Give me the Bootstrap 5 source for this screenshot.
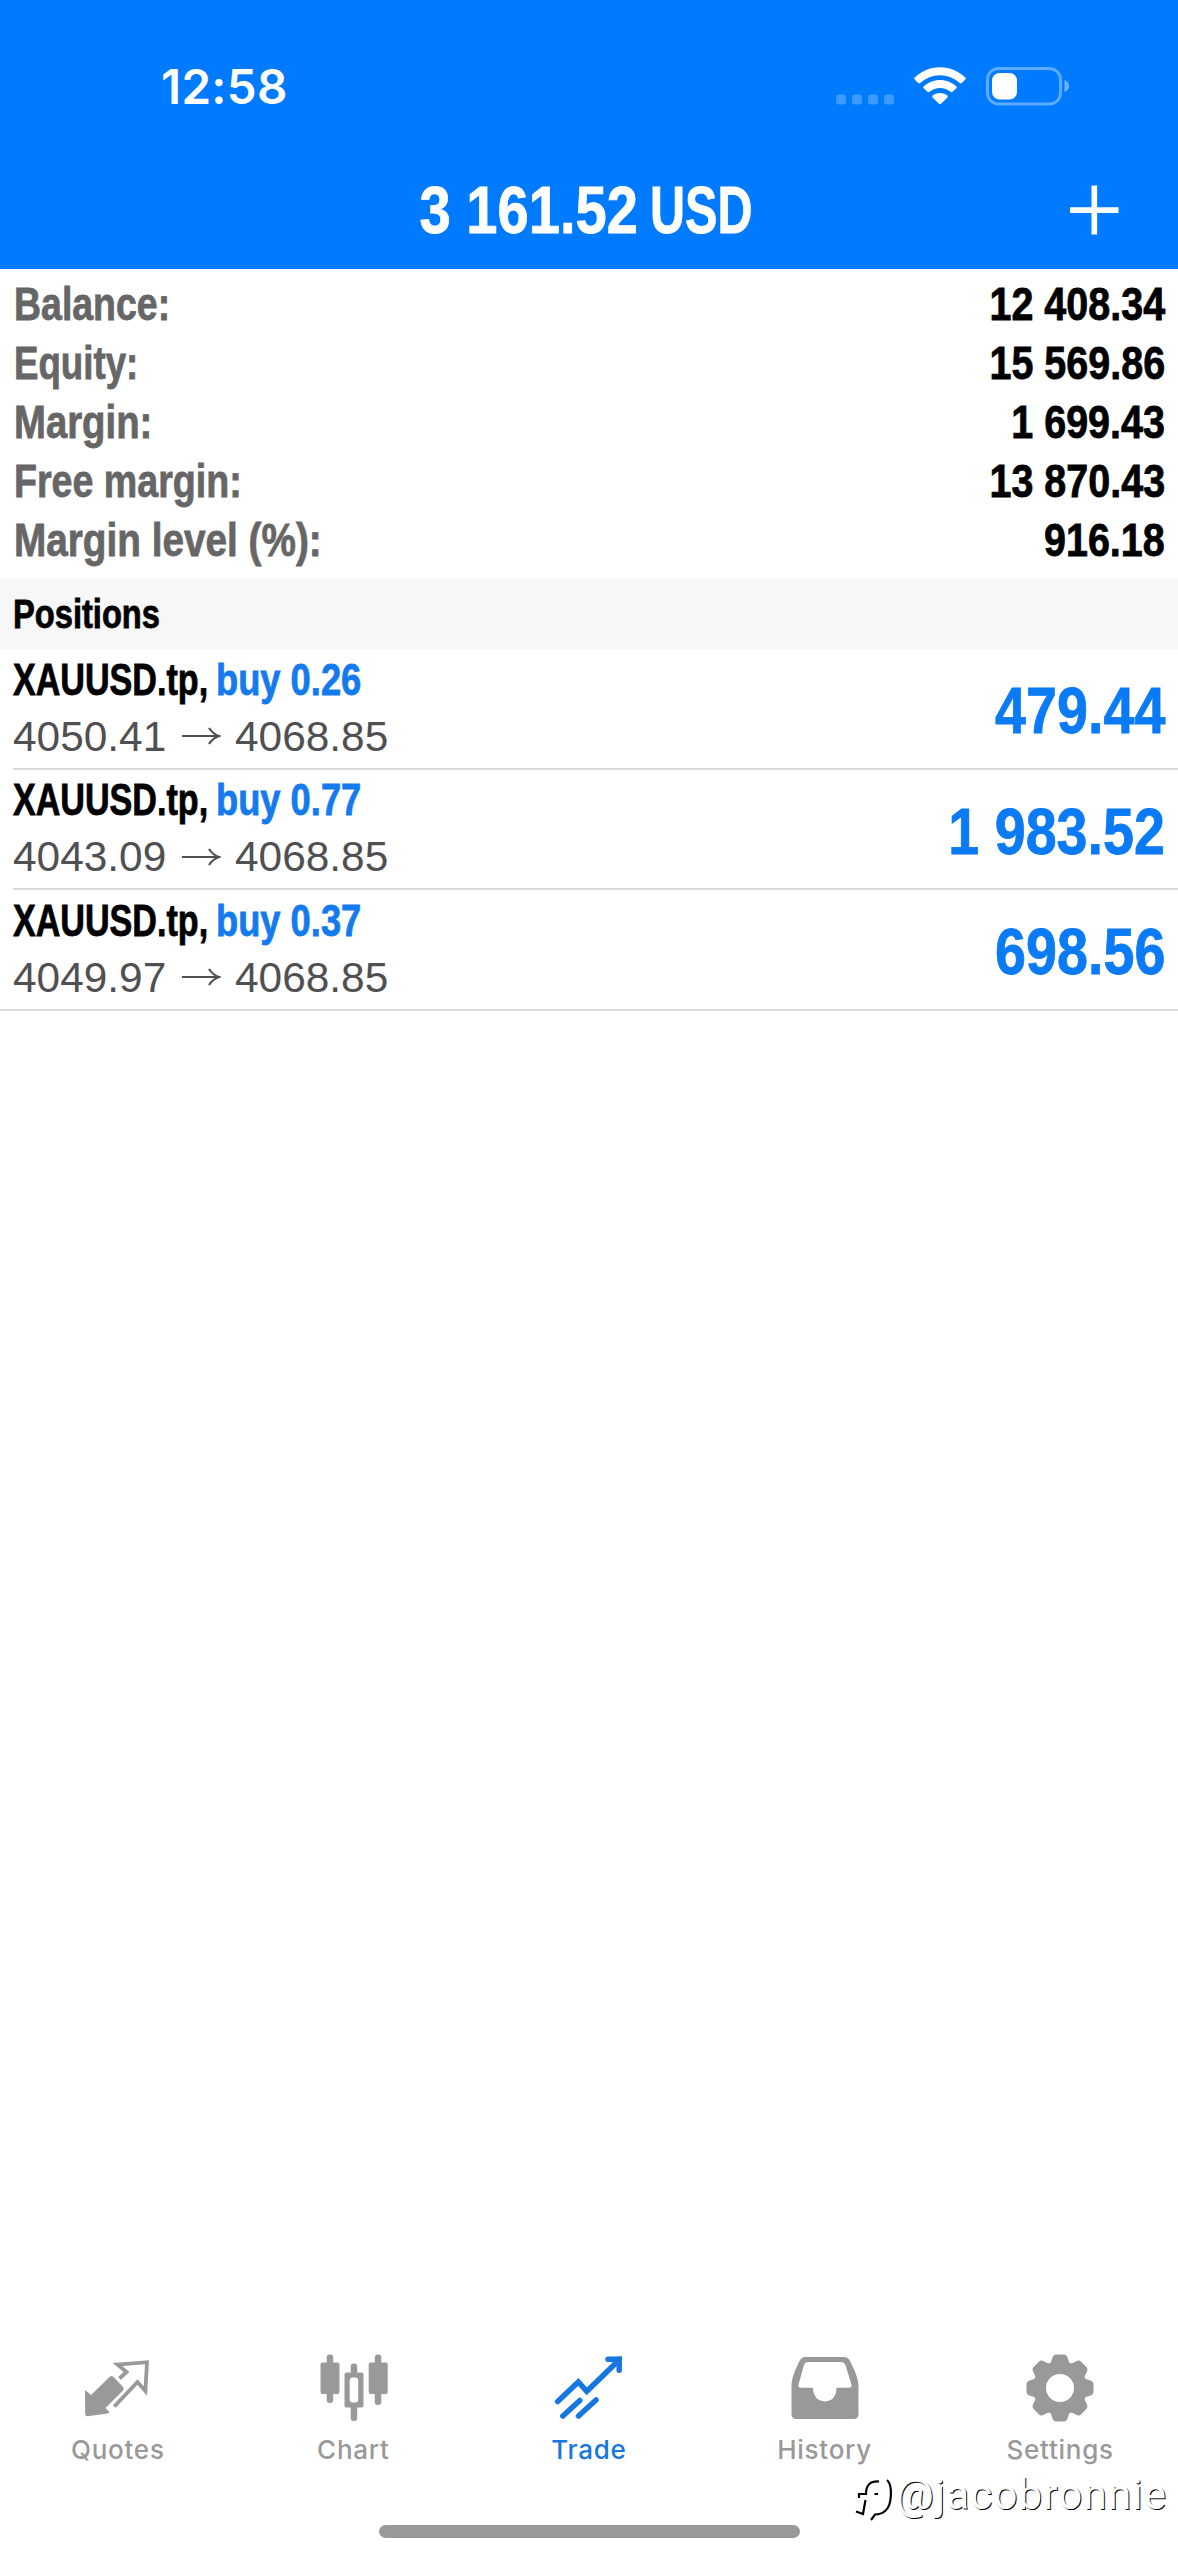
<!DOCTYPE html>
<html lang="en">
<head>
<meta charset="utf-8">
<meta name="viewport" content="width=device-width, initial-scale=1">
<title>Trade</title>
<link href="https://cdn.jsdelivr.net/npm/bootstrap@5.3.0/dist/css/bootstrap.min.css" rel="stylesheet">
<style>
body{font-family:"Liberation Sans",Arial,sans-serif;color:#000;background:#fff}
.screen{width:1178px;height:2560px;overflow:hidden}
.topbar{background:#007aff;height:269px;color:#fff}
.status{height:152px;padding:67px 109px 0 161px}
.clock{font:600 47.5px/40px Inter,sans-serif;letter-spacing:.3px}
.titlebar{height:117px;line-height:117px}
.titlebar .side{width:160px}
.titlebar .side.end{padding:0 59px 2px 0}
.cond{display:inline-block;font-weight:700;white-space:nowrap;transform:scaleX(var(--k));transform-origin:0 50%;-webkit-text-stroke:.8px currentColor}
.cond.rt{transform-origin:100% 50%}
.headline{font-size:66px;margin-left:-8px;gap:12px}
.headline .sum{--k:.85}
.headline .cur{--k:.735}
.summary{height:310px;padding:5px 13px 0 14px;font-size:47px;line-height:59px}
.caption-c{color:#666}
.amount{--k:.84}
.section-h{height:70px;line-height:69px;background:#f7f7f7;padding-left:13px;font-size:41.5px}
.section-h .cond{--k:.787}
.pos{height:120.5px;padding-right:13px;margin-left:13px;border-bottom:2px solid #dadada}
.pos.last{margin-left:0;padding-left:13px}
.deal{padding-top:5.5px}
.deal-name{height:50px;line-height:50px;font-size:44px}
.sym{--k:.775;width:203px}
.act{--k:.825;color:#147bee}
.quote{height:63px;line-height:63px;font-size:42.4px;color:#505052}
.arrow{width:39px;height:20px;margin:0 14px 0 0}
.from{width:169px}
.profit{font-size:65.5px;line-height:123px;color:#0a7af5;--k:.85}
.tabs{height:214px;font:500 26px/32px Inter,sans-serif;color:#999;letter-spacing:.75px}
.tabs svg{width:80px;height:80px;margin-bottom:8px}
.tabs .on{color:#1677e0}
.home{width:421px;height:13px;border-radius:7px;background:#999;left:379px;top:2525px}
.wm{left:850px;top:2470px;height:50px;color:#fff;font:400 42px/50px Roboto,sans-serif;letter-spacing:1.2px;text-shadow:1px 1px 0 #000}
.wm svg{width:46px;height:52px}
</style>
<script src="https://cdn.jsdelivr.net/npm/bootstrap@5.3.0/dist/js/bootstrap.bundle.min.js"></script>
</head>
<body>
<div class="screen position-relative d-flex flex-column">
<header class="topbar">
  <div class="status d-flex justify-content-between align-items-start">
    <span class="clock">12:58</span>
    <svg width="233" height="39" viewBox="836 67 233 39">
      <g fill="#3d9bff"><rect x="836" y="94.5" width="10" height="10" rx="3"/><rect x="852" y="94.5" width="10" height="10" rx="3"/><rect x="868" y="94.5" width="10" height="10" rx="3"/><rect x="884" y="94.5" width="10" height="10" rx="3"/></g>
      <g fill="#fff"><path d="M940 67.300c10 0 18.500 4 25.300 10.200q1 1 0 2l-3.600 3.600q-1 .8-2 0c-5.600-5-12-7.800-19.700-7.800s-14.100 2.800-19.700 7.800q-1 .8-2 0l-3.600-3.600q-1-1 0-2c6.800-6.200 15.300-10.200 25.300-10.200z"/><path d="M940 80c6.500 0 12 2.500 16.300 6.300q1 1 0 2l-3.700 3.500q-1 .9-2 0c-3-2.500-6.500-3.900-10.600-3.900s-7.600 1.400-10.600 3.900q-1 .9-2 0l-3.700-3.500q-1-1 0-2c4.300-3.800 9.800-6.300 16.300-6.300z"/><path d="M940 93c3 0 5.500 1 7.400 2.500q1 1 0 2l-6.400 6.300q-1 .9-2 0l-6.400-6.300q-1-1 0-2c1.900-1.500 4.400-2.500 7.400-2.500z"/></g>
      <rect x="987.500" y="68.500" width="73" height="35.500" rx="11" fill="none" stroke="#5cabff" stroke-width="3"/>
      <rect x="992" y="73" width="25" height="26.500" rx="7.500" fill="#fff"/><path d="M1064.500 80q4.500 1.500 4.500 6t-4.500 6z" fill="#6bb2ff"/>
    </svg>
  </div>
  <div class="titlebar d-flex justify-content-between align-items-center">
    <span class="side"></span>
    <span class="headline d-flex"><span class="cond rt sum">3 161.52</span><span class="cond cur">USD</span></span>
    <span class="side end d-flex justify-content-end"><svg width="49" height="50" viewBox="0 0 49 50"><path d="M0 25.200h48.500M24.300.5v49" stroke="#fff" stroke-width="5.700"/></svg></span>
  </div>
</header>
<section class="summary">
  <div class="d-flex justify-content-between"><span class="cond caption-c" style="--k:.797">Balance:</span><span class="cond rt amount">12 408.34</span></div>
  <div class="d-flex justify-content-between"><span class="cond caption-c" style="--k:.78">Equity:</span><span class="cond rt amount">15 569.86</span></div>
  <div class="d-flex justify-content-between"><span class="cond caption-c" style="--k:.815">Margin:</span><span class="cond rt amount">1 699.43</span></div>
  <div class="d-flex justify-content-between"><span class="cond caption-c" style="--k:.8">Free margin:</span><span class="cond rt amount">13 870.43</span></div>
  <div class="d-flex justify-content-between"><span class="cond caption-c" style="--k:.824">Margin level (%):</span><span class="cond rt amount">916.18</span></div>
</section>
<div class="section-h"><span class="cond">Positions</span></div>
<main class="flex-grow-1">
  <div class="pos d-flex justify-content-between">
    <div class="deal"><div class="deal-name d-flex"><span class="cond sym">XAUUSD.tp,</span><span class="cond act">buy 0.26</span></div>
    <div class="quote d-flex align-items-center"><span class="from">4050.41</span><svg class="arrow" viewBox="0 0 39 20"><path d="M0 10h36M27 2q4 6 10 8q-6 2-10 8" fill="none" stroke="#505052" stroke-width="2.200"/></svg><span>4068.85</span></div></div>
    <span class="cond rt profit">479.44</span>
  </div>
  <div class="pos d-flex justify-content-between">
    <div class="deal"><div class="deal-name d-flex"><span class="cond sym">XAUUSD.tp,</span><span class="cond act">buy 0.77</span></div>
    <div class="quote d-flex align-items-center"><span class="from">4043.09</span><svg class="arrow" viewBox="0 0 39 20"><path d="M0 10h36M27 2q4 6 10 8q-6 2-10 8" fill="none" stroke="#505052" stroke-width="2.200"/></svg><span>4068.85</span></div></div>
    <span class="cond rt profit">1 983.52</span>
  </div>
  <div class="pos last d-flex justify-content-between">
    <div class="deal"><div class="deal-name d-flex"><span class="cond sym">XAUUSD.tp,</span><span class="cond act">buy 0.37</span></div>
    <div class="quote d-flex align-items-center"><span class="from">4049.97</span><svg class="arrow" viewBox="0 0 39 20"><path d="M0 10h36M27 2q4 6 10 8q-6 2-10 8" fill="none" stroke="#505052" stroke-width="2.200"/></svg><span>4068.85</span></div></div>
    <span class="cond rt profit">698.56</span>
  </div>
</main>
<nav class="tabs row g-0 text-center">
  <div class="col d-flex flex-column align-items-center">
    <svg viewBox="77 2346 80 80"><path fill="currentColor" d="M84 2390l6 5 18.500-18q2-2 4 0l9.500 10q1.500 2 0 3.500l-17.500 17.500 4 4q-.5 1.200-2 1.500l-20 2.700q-2 0-2.300-2z"/><path fill="none" stroke="currentColor" stroke-width="3.800" d="M118.500 2378.500l7-6.500-9-7.500 29.500-2.300-1.600 28.800-7.900-9-23.200 24.500"/></svg>
    <span>Quotes</span></div>
  <div class="col d-flex flex-column align-items-center">
    <svg viewBox="312 2346 80 80"><g fill="currentColor"><rect x="325.700" y="2354.500" width="6.500" height="48.500" rx="3"/><rect x="319.500" y="2362.500" width="19" height="31.500" rx="2"/><rect x="373.800" y="2354.500" width="6.500" height="50.500" rx="3"/><rect x="367.700" y="2362.500" width="19" height="31.500" rx="2"/><rect x="349.700" y="2363.500" width="6.500" height="57.500" rx="3"/><rect x="343.500" y="2372.500" width="19" height="35" rx="2"/></g><rect x="348.700" y="2377.500" width="8.500" height="25" rx="3" fill="#fff"/></svg>
    <span>Chart</span></div>
  <div class="col on d-flex flex-column align-items-center">
    <svg viewBox="549 2346 80 80"><g fill="none" stroke="currentColor" stroke-width="5.500" stroke-linecap="round"><path d="M557.700 2401.500l20.600-19.500 8.500 9.300 31-30"/><path d="M608 2359.300h11.200v11"/><path d="M562.800 2416l17-15.500M578.500 2416l17.500-16"/></g><path d="M617 2356.500h5v5z" fill="currentColor"/></svg>
    <span>Trade</span></div>
  <div class="col d-flex flex-column align-items-center">
    <svg viewBox="784 2346 80 80"><path fill="currentColor" fill-rule="evenodd" d="M804 2357h39q4 0 6 4c4 8 8.500 17 8.500 25v28q0 5-5 5h-57q-5 0-5-5v-28c0-8 4-17 8-25q2-4 5.500-4zm3 5q-3 0-4 3l-5.500 19.500q-.6 3 2 3.300h12.500c0 8 4.500 13.600 12 13.600s11.500-5.600 11.500-13.600h13q2.500 0 2-3l-6-19.500q-1.500-3.300-5-3.300z"/></svg>
    <span>History</span></div>
  <div class="col d-flex flex-column align-items-center">
    <svg viewBox="1020 2346 80 80"><defs><path id="tooth" d="M1049 2368l3.500-10.500q1-3 4-3h7q3 0 4 3l3.500 10.500z"/></defs><circle cx="1060" cy="2388" r="20.500" fill="none" stroke="currentColor" stroke-width="13"/><g fill="currentColor"><use href="#tooth"/><use href="#tooth" transform="rotate(45 1060 2388)"/><use href="#tooth" transform="rotate(90 1060 2388)"/><use href="#tooth" transform="rotate(135 1060 2388)"/><use href="#tooth" transform="rotate(180 1060 2388)"/><use href="#tooth" transform="rotate(225 1060 2388)"/><use href="#tooth" transform="rotate(270 1060 2388)"/><use href="#tooth" transform="rotate(315 1060 2388)"/></g></svg>
    <span>Settings</span></div>
</nav>
<div class="home position-absolute"></div>
<div class="wm position-absolute d-flex"><svg viewBox="850 2470 46 52"><g fill="none" stroke="#000" stroke-width="2.200"><path d="M859 2498v-4h7c0-9 4-13 13-12.500M865.500 2500l-2.500 14-7-2.500M874.500 2494h3.500"/><path d="M887 2480c6 5 5 26-2 31q-4 3.500-10 3.500l-4 5.500"/></g></svg><span>@jacobronnie</span></div>
</div>
</body>
</html>
